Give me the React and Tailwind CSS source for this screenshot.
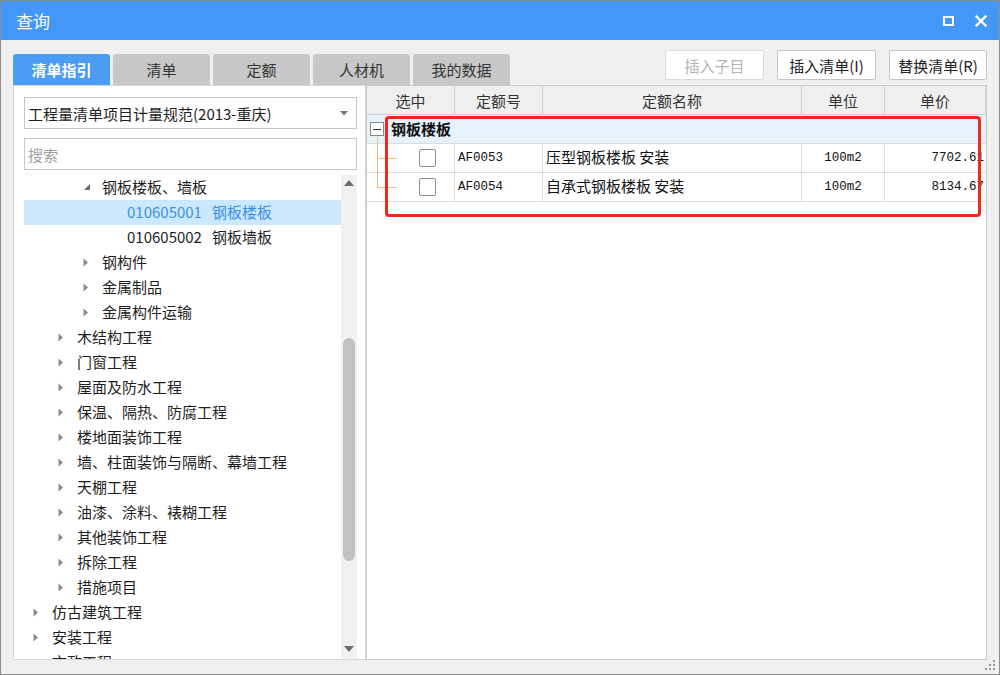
import React from "react";

const tree = [
  { lvl: 2, arrow: "down", text: "钢板楼板、墙板" },
  { lvl: 3, code: "010605001", text: "钢板楼板", selected: true },
  { lvl: 3, code: "010605002", text: "钢板墙板" },
  { lvl: 2, arrow: "right", text: "钢构件" },
  { lvl: 2, arrow: "right", text: "金属制品" },
  { lvl: 2, arrow: "right", text: "金属构件运输" },
  { lvl: 1, arrow: "right", text: "木结构工程" },
  { lvl: 1, arrow: "right", text: "门窗工程" },
  { lvl: 1, arrow: "right", text: "屋面及防水工程" },
  { lvl: 1, arrow: "right", text: "保温、隔热、防腐工程" },
  { lvl: 1, arrow: "right", text: "楼地面装饰工程" },
  { lvl: 1, arrow: "right", text: "墙、柱面装饰与隔断、幕墙工程" },
  { lvl: 1, arrow: "right", text: "天棚工程" },
  { lvl: 1, arrow: "right", text: "油漆、涂料、裱糊工程" },
  { lvl: 1, arrow: "right", text: "其他装饰工程" },
  { lvl: 1, arrow: "right", text: "拆除工程" },
  { lvl: 1, arrow: "right", text: "措施项目" },
  { lvl: 0, arrow: "right", text: "仿古建筑工程" },
  { lvl: 0, arrow: "right", text: "安装工程" },
  { lvl: 0, arrow: "right", text: "市政工程" },
];

const lvlPad = ["pl-[9px]", "pl-[34px]", "pl-[59px]", "pl-[84px]"];

function Arrow({ kind }) {
  if (kind === "down") {
    return (
      <svg width="8" height="8" viewBox="0 0 8 8" className="block">
        <polygon points="7,1 7,7 1,7" fill="#6b6b6b" />
      </svg>
    );
  }
  if (kind === "right") {
    return (
      <svg width="6" height="9" viewBox="0 0 6 9" className="block">
        <polygon points="0.5,0.5 5,4.5 0.5,8.5" fill="#8a8a8a" />
      </svg>
    );
  }
  return null;
}

function Tabs() {
  const tabs = ["清单指引", "清单", "定额", "人材机", "我的数据"];
  return (
    <div className="mt-[14px] flex gap-[3px]">
      {tabs.map((t, i) => (
        <div
          key={t}
          className={
            i === 0
              ? "flex h-[31px] w-[97px] items-center justify-center rounded-t-[3px] bg-[#4a9cf4] text-[15px] font-bold text-white"
              : "flex h-[31px] w-[97px] items-center justify-center rounded-t-[3px] bg-[#c8c8c8] text-[15px] text-[#333]"
          }
        >
          {t}
        </div>
      ))}
    </div>
  );
}

function Buttons() {
  return (
    <div className="mt-[10px] flex gap-[13px]">
      <div className="flex h-[30px] w-[99px] items-center justify-center rounded-[2px] border border-[#dadada] bg-white text-[15px] text-[#b4b4b4]">
        插入子目
      </div>
      <div className="flex h-[30px] w-[99px] items-center justify-center rounded-[2px] border border-[#c4c4c4] bg-white text-[15px] text-[#222]">
        插入清单(I)
      </div>
      <div className="flex h-[30px] w-[98px] items-center justify-center rounded-[2px] border border-[#c4c4c4] bg-white text-[15px] text-[#222]">
        替换清单(R)
      </div>
    </div>
  );
}

function LeftPanel() {
  return (
    <div className="flex h-full w-[353px] flex-col border border-[#d6d6d6] bg-white pl-[10px] pr-[8px] pt-[11px]">
      <div className="flex h-[32px] w-[333px] shrink-0 items-center justify-between border border-[#c6c6c6] bg-white pl-[3px] pr-[8px]">
        <span className="text-[15px] text-[#1e1e1e]">工程量清单项目计量规范(2013-重庆)</span>
        <svg width="8" height="5" viewBox="0 0 8 5" className="block">
          <polygon points="0,0 8,0 4,4.5" fill="#777" />
        </svg>
      </div>
      <div className="mt-[9px] flex h-[32px] w-[333px] shrink-0 items-center border border-[#c6c6c6] bg-white pl-[3px]">
        <span className="text-[15px] text-[#a0a0a0]">搜索</span>
      </div>
      <div className="mt-[5px] flex min-h-0 flex-1 overflow-hidden">
        <div className="w-[317px] overflow-hidden">
          {tree.map((n, i) => (
            <div
              key={i}
              className={`flex h-[25px] items-center pb-[2px] ${lvlPad[n.lvl]} ${n.selected ? "bg-[#cce8ff]" : ""}`}
            >
              <div className="flex w-[19px] shrink-0 items-center pt-[1px]">
                <Arrow kind={n.arrow} />
              </div>
              {n.code ? (
                <span className={`flex gap-[10px] whitespace-nowrap text-[15px] ${n.selected ? "text-[#3d8ee0]" : "text-[#1e1e1e]"}`}>
                  <span>{n.code}</span>
                  <span>{n.text}</span>
                </span>
              ) : (
                <span className="whitespace-nowrap text-[15px] text-[#1e1e1e]">{n.text}</span>
              )}
            </div>
          ))}
        </div>
        <div className="flex w-[16px] shrink-0 flex-col items-center bg-[#f1f1f1]">
          <svg width="10" height="6" viewBox="0 0 10 6" className="mt-[5px] block">
            <polygon points="5,0 10,6 0,6" fill="#6e6e6e" />
          </svg>
          <div className="mt-[152px] h-[223px] w-[12px] rounded-full bg-[#c2c2c2]" />
          <div className="flex-1" />
          <svg width="10" height="6" viewBox="0 0 10 6" className="mb-[7px] block">
            <polygon points="0,0 10,0 5,6" fill="#6e6e6e" />
          </svg>
        </div>
      </div>
    </div>
  );
}

function RightPanel() {
  const mono = "font-['Liberation_Mono','DejaVu_Sans_Mono',monospace] text-[12.5px] text-[#111]";
  const rows = [
    { code: "AF0053", name: "压型钢板楼板 安装", unit: "100m2", price: "7702.61", last: false },
    { code: "AF0054", name: "自承式钢板楼板 安装", unit: "100m2", price: "8134.67", last: true },
  ];
  return (
    <div className="relative h-full flex-1 border border-[#c9c9c9] bg-white">
      <div className="flex h-[29px] border-b border-[#cfcfcf] bg-[#efefef] text-[15px] text-[#333]">
        <div className="flex w-[88px] items-center justify-center border-r border-[#d2d2d2]">选中</div>
        <div className="flex w-[88px] items-center justify-center border-r border-[#d2d2d2]">定额号</div>
        <div className="flex w-[259px] items-center justify-center border-r border-[#d2d2d2]">定额名称</div>
        <div className="flex w-[83px] items-center justify-center border-r border-[#d2d2d2]">单位</div>
        <div className="flex flex-1 items-center justify-center border-r border-[#d2d2d2]">单价</div>
      </div>
      <div className="relative flex h-[29px] items-center border-b border-[#dcdcdc] bg-[#e5f1fb]">
        <div className="ml-[3px] flex h-[14px] w-[14px] items-center justify-center border border-[#8a8a8a] bg-white">
          <div className="h-[1px] w-[8px] bg-[#333]" />
        </div>
        <span className="mb-[1px] ml-[7px] text-[15px] font-bold text-[#111]">钢板楼板</span>
        <div className="absolute left-[10px] top-[21px] h-[8px] w-[1px] bg-[#f4bf78]" />
      </div>
      {rows.map((r) => (
        <div key={r.code} className="flex h-[29px] border-b border-[#dcdcdc]">
          <div className="relative flex w-[88px] items-center border-r border-[#dcdcdc] pl-[52px]">
            <div className={`absolute left-[10px] top-0 w-[1px] bg-[#f4bf78] ${r.last ? "h-[14px]" : "h-[29px]"}`} />
            <div className="absolute left-[10px] top-[14px] h-[1px] w-[20px] bg-[#f4bf78]" />
            <div className="h-[18px] w-[17px] rounded-[2px] border border-[#8d8d8d] bg-white" />
          </div>
          <div className={`flex w-[88px] items-center border-r border-[#dcdcdc] pl-[3px] ${mono}`}>{r.code}</div>
          <div className="flex w-[259px] items-center border-r border-[#dcdcdc] pb-[3px] pl-[3px] text-[15px] text-[#111]">{r.name}</div>
          <div className={`flex w-[83px] items-center justify-center border-r border-[#dcdcdc] ${mono}`}>{r.unit}</div>
          <div className={`flex flex-1 items-center justify-end pr-[2px] ${mono}`}>{r.price}</div>
        </div>
      ))}
      <div className="absolute left-[18px] top-[30px] h-[101px] w-[596px] rounded-[4px] border-[3px] border-[#f1261c]" />
    </div>
  );
}

export default function App() {
  return (
    <div className="flex h-[675px] w-[1000px] flex-col overflow-hidden border border-[#8e8e8e] bg-[#f0f0f0] font-['Noto_Sans_CJK_SC','Noto_Sans',sans-serif] leading-none">
      <div className="flex h-[39px] shrink-0 items-center justify-between bg-[#4297f8] pl-[15px] pr-[12px]">
        <span className="text-[17px] text-white">查询</span>
        <div className="flex items-center gap-[21px]">
          <svg width="11" height="10" viewBox="0 0 11 10" className="block">
            <rect x="1" y="1" width="9" height="8" fill="none" stroke="white" strokeWidth="2" />
          </svg>
          <svg width="12" height="12" viewBox="0 0 12 12" className="block">
            <path d="M1.5 1.5 L10.5 10.5 M10.5 1.5 L1.5 10.5" stroke="white" strokeWidth="2.4" strokeLinecap="square" />
          </svg>
        </div>
      </div>
      <div className="flex h-[45px] shrink-0 items-start justify-between px-[12px]">
        <Tabs />
        <Buttons />
      </div>
      <div className="flex h-[575px] shrink-0 px-[12px]">
        <LeftPanel />
        <RightPanel />
      </div>
      <div className="flex flex-1 items-end justify-end pb-[3px] pr-[3px]">
        <svg width="11" height="11" viewBox="0 0 11 11" className="block">
          <rect x="8" y="0" width="2" height="2" fill="#9a9a9a" />
          <rect x="4" y="4" width="2" height="2" fill="#9a9a9a" />
          <rect x="8" y="4" width="2" height="2" fill="#9a9a9a" />
          <rect x="0" y="8" width="2" height="2" fill="#9a9a9a" />
          <rect x="4" y="8" width="2" height="2" fill="#9a9a9a" />
          <rect x="8" y="8" width="2" height="2" fill="#9a9a9a" />
        </svg>
      </div>
    </div>
  );
}
